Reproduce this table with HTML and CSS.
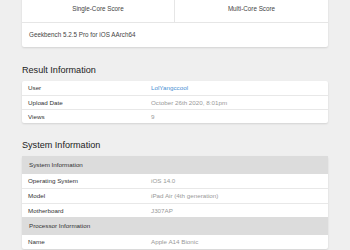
FILE: index.html
```html
<html>
<head>
<title>Geekbench Result</title>
<link rel="stylesheet" href="styles.css">
</head>
<body>
    <div class="page">
        <div class="card topCard">
            <div class="scoreRow">
                <div class="scoreCell divider">Single-Core Score</div>
                <div class="scoreCell">Multi-Core Score</div>
            </div>
            <div class="versionRow">Geekbench 5.2.5 Pro for iOS AArch64</div>
        </div>

        <h2 class="sectionTitle">Result Information</h2>
        <div class="card">
            <div class="row"><div class="label">User</div><div class="value"><a class="userLink" href="#">LolYangccool</a></div></div>
            <div class="row"><div class="label">Upload Date</div><div class="value">October 26th 2020, 8:01pm</div></div>
            <div class="row"><div class="label">Views</div><div class="value">9</div></div>
        </div>

        <h2 class="sectionTitle">System Information</h2>
        <div class="card systemCard">
            <div class="groupHead">System Information</div>
            <div class="row"><div class="label">Operating System</div><div class="value">iOS 14.0</div></div>
            <div class="row"><div class="label">Model</div><div class="value">iPad Air (4th generation)</div></div>
            <div class="row"><div class="label">Motherboard</div><div class="value">J307AP</div></div>
            <div class="groupHead">Processor Information</div>
            <div class="row"><div class="label">Name</div><div class="value">Apple A14 Bionic</div></div>
        </div>
    </div>
</body>
</html>
```

FILE: styles.css
```css
body {
    margin: 0;
    background-color: #efefef;
    font-family: "Liberation Sans", Arial, sans-serif;
    color: #333;}
.page {
    padding: 0 22px;}
.card {
    background-color: #fff;
    border-radius: 2px;
    box-shadow: 0 1px 2px rgba(0, 0, 0, 0.12);}
.topCard {
    margin-top: -5px;}
.scoreRow {
    display: grid;
    grid-template-columns: 1fr 1fr;
    border-bottom: 1px solid #e6e6e6;}
.scoreCell {
    height: 27px;
    line-height: 27px;
    text-align: center;
    font-size: 6.3px;
    color: #444;}
.divider {
    border-right: 1px solid #e6e6e6;}
.versionRow {
    height: 24px;
    line-height: 24px;
    padding-left: 7px;
    font-size: 6.3px;
    color: #444;}
.sectionTitle {
    margin: 16.5px 0 5px 0;
    height: 12px;
    line-height: 12px;
    font-size: 9.1px;
    font-weight: normal;
    color: #222;}
.row {
    display: grid;
    grid-template-columns: 123px 1fr;
    height: 14px;
    line-height: 14px;
    font-size: 6.25px;
    border-top: 1px solid #e8e8e8;
    box-sizing: border-box;}
.row:first-child {
    border-top: none;}
.systemCard .row {
    height: 14.3px;
    line-height: 14.3px;}
.label {
    padding-left: 6px;
    color: #333;}
.value {
    padding-left: 6px;
    color: #999;}
.userLink {
    color: #4a8fd3;
    text-decoration: none;}
.groupHead {
    height: 18px;
    line-height: 18px;
    padding-left: 7px;
    font-size: 6.25px;
    background-color: #dcdcdc;
    color: #333;}
.groupHead + .row {
    border-top: none;}
```
